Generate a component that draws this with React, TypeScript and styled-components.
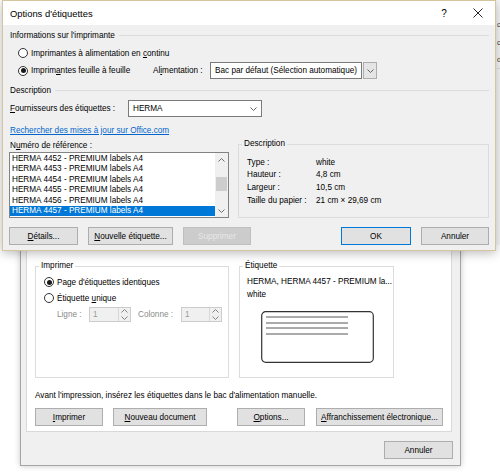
import styled, { createGlobalStyle, css } from "styled-components";

const GlobalStyle = createGlobalStyle`
  html, body { margin: 0; padding: 0; background: #fff; }
  body {
    font-family: "Liberation Sans", Arial, sans-serif;
    font-size: 8.2px;
    color: #000;
  }
  * { box-sizing: border-box; }
`;

const rows = ["4452", "4453", "4454", "4455", "4456", "4457"];

const Chevron = ({ up, color = "#555" }: { up?: boolean; color?: string }) => (
  <svg width="7" height="4" viewBox="0 0 7 4">
    <polyline
      points={up ? "0.5,3.5 3.5,0.5 6.5,3.5" : "0.5,0.5 3.5,3.5 6.5,0.5"}
      fill="none"
      stroke={color}
      strokeWidth="0.9"
    />
  </svg>
);

const CloseIcon = () => (
  <svg width="10" height="10" viewBox="0 0 10 10">
    <path d="M0.5 0.5 L9.5 9.5 M9.5 0.5 L0.5 9.5" stroke="#111" strokeWidth="0.9" />
  </svg>
);

const LabelPreview = () => (
  <svg width="113" height="52" viewBox="0 0 113 52">
    <rect x="0.7" y="0.7" width="111.6" height="50.6" rx="4" fill="#fff" stroke="#333" strokeWidth="1.2" />
    {[6, 12, 17, 23].map((y) => (
      <line key={y} x1="5" x2="87" y1={y} y2={y} stroke="#444" strokeWidth="0.9" />
    ))}
  </svg>
);

export default function App() {
  return (
    <>
      <GlobalStyle />
      <Desktop>
        <BgWindow>
          <BgLine>c</BgLine>
          <BgLine>c</BgLine>
          <BgLine>d</BgLine>
        </BgWindow>

        <LabelsDialog>
          <TabPanel>
            <FieldsRow>
              <Group $w={194}>
                <Legend>Imprimer</Legend>
                <GroupContent $pl={5} $pt={4}>
                  <RadioRow>
                    <RadioDot $checked />
                    <span>Page d'étiquettes identiques</span>
                  </RadioRow>
                  <RadioRow>
                    <RadioDot />
                    <span>
                      Étiquette <u>u</u>nique
                    </span>
                  </RadioRow>
                  <SpinRow>
                    <DimText $w={32}>Ligne :</DimText>
                    <SpinBox $w={42}>
                      <SpinValue>1</SpinValue>
                      <SpinButtons>
                        <Chevron up color="#777" />
                        <Chevron color="#777" />
                      </SpinButtons>
                    </SpinBox>
                    <DimText $w={43} $ml={7}>
                      Colonne :
                    </DimText>
                    <SpinBox $w={41}>
                      <SpinValue>1</SpinValue>
                      <SpinButtons>
                        <Chevron up color="#777" />
                        <Chevron color="#777" />
                      </SpinButtons>
                    </SpinBox>
                  </SpinRow>
                </GroupContent>
              </Group>
              <Group $w={155}>
                <Legend>Étiquette</Legend>
                <GroupContent $pl={4} $pt={4}>
                  <InfoLine>HERMA, HERMA 4457 - PREMIUM la...</InfoLine>
                  <InfoLine>white</InfoLine>
                  <Preview>
                    <LabelPreview />
                  </Preview>
                </GroupContent>
              </Group>
            </FieldsRow>
            <Note>Avant l'impression, insérez les étiquettes dans le bac d'alimentation manuelle.</Note>
            <ButtonRow>
              <Button $w={68}>
                <u>I</u>mprimer
              </Button>
              <Button $w={94} $ml={10}>
                <u>N</u>ouveau document
              </Button>
              <Button $w={68} $ml={30}>
                <u>O</u>ptions...
              </Button>
              <Button $w={127} $ml={11}>
                <u>A</u>ffranchissement électronique...
              </Button>
            </ButtonRow>
          </TabPanel>
          <Footer>
            <Button $w={69}>Annuler</Button>
          </Footer>
        </LabelsDialog>

        <OptionsDialog>
          <TitleBar>
            <Title>Options d'étiquettes</Title>
            <TitleButton>?</TitleButton>
            <TitleButton>
              <CloseIcon />
            </TitleButton>
          </TitleBar>
          <DialogBody>
            <SectionHead>
              <span>Informations sur l'imprimante</span>
              <Rule />
            </SectionHead>
            <RadioRow $mt={5} $pl={9}>
              <RadioDot />
              <span>
                Imprimantes à alimentation en <u>c</u>ontinu
              </span>
            </RadioRow>
            <RadioRow $mt={2} $pl={9} $h={17}>
              <RadioDot $checked />
              <FixedText $w={122}>
                Imprim<u>a</u>ntes feuille à feuille
              </FixedText>
              <FixedText $w={57}>
                Al<u>i</u>mentation :
              </FixedText>
              <Select $w={152}>Bac par défaut (Sélection automatique)</Select>
              <DropButton>
                <Chevron />
              </DropButton>
            </RadioRow>
            <SectionHead $mt={5}>
              <span>Description</span>
              <Rule />
            </SectionHead>
            <SupplierRow>
              <FixedText $w={118}>
                <u>F</u>ournisseurs des étiquettes :
              </FixedText>
              <Select $w={134}>
                <span>HERMA</span>
                <InlineArrow>
                  <Chevron />
                </InlineArrow>
              </Select>
            </SupplierRow>
            <Link>Rechercher des mises à jour sur Office.com</Link>
            <MainRow>
              <LeftCol>
                <RefLabel>
                  N<u>u</u>méro de référence :
                </RefLabel>
                <ListBox>
                  <ListItems>
                    {rows.map((n, i) => (
                      <ListItem key={n} $selected={i === rows.length - 1}>
                        HERMA {n} - PREMIUM labels A4
                      </ListItem>
                    ))}
                  </ListItems>
                  <ScrollBar>
                    <ScrollArrow>
                      <Chevron up color="#606060" />
                    </ScrollArrow>
                    <ScrollTrack>
                      <ScrollThumb />
                    </ScrollTrack>
                    <ScrollArrow>
                      <Chevron color="#606060" />
                    </ScrollArrow>
                  </ScrollBar>
                </ListBox>
              </LeftCol>
              <Group $h={79} $grow>
                <Legend>Description</Legend>
                <DescGrid>
                  <span>Type :</span>
                  <span>white</span>
                  <span>Hauteur :</span>
                  <span>4,8 cm</span>
                  <span>Largeur :</span>
                  <span>10,5 cm</span>
                  <span>Taille du papier :</span>
                  <span>21 cm × 29,69 cm</span>
                </DescGrid>
              </Group>
            </MainRow>
            <ButtonRow $mt={9}>
              <Button $w={69}>
                <u>D</u>étails...
              </Button>
              <Button $w={85} $ml={10}>
                <u>N</u>ouvelle étiquette...
              </Button>
              <Button $w={68} $ml={10} $disabled>
                Supprimer
              </Button>
              <Spacer />
              <Button $w={70} $focused>
                OK
              </Button>
              <Button $w={68} $ml={10}>
                Annuler
              </Button>
            </ButtonRow>
          </DialogBody>
        </OptionsDialog>
      </Desktop>
    </>
  );
}

const Desktop = styled.div`
  position: relative;
  width: 500px;
  height: 474px;
  overflow: hidden;
  background: #fff;
`;

const BgWindow = styled.div`
  position: absolute;
  left: 470px;
  top: 0;
  width: 30px;
  height: 245px;
  background: #f7f7f7;
  padding: 16px 0 0 26px;
  border-left: 1px solid #ddd;
`;

const BgLine = styled.div`
  height: 17.5px;
  line-height: 17.5px;
  font-size: 7.4px;
  color: #444;
  &:last-child {
    border-bottom: 1px solid #ddd;
  }
`;

const OptionsDialog = styled.div`
  position: absolute;
  left: 2px;
  top: 0;
  width: 494px;
  height: 251px;
  z-index: 2;
  display: flex;
  flex-direction: column;
  background: #f0f0f0;
  border: 1px solid #d4c59e;
  box-shadow: 0 2px 10px rgba(0, 0, 0, 0.28);
`;

const TitleBar = styled.div`
  height: 24px;
  display: flex;
  align-items: center;
  padding-left: 7px;
  background: #fff;
`;

const Title = styled.div`
  flex: 1;
  font-size: 9.4px;
`;

const TitleButton = styled.div`
  width: 34px;
  height: 24px;
  display: flex;
  align-items: center;
  justify-content: center;
  font-size: 10px;
`;

const DialogBody = styled.div`
  display: flex;
  flex-direction: column;
  padding: 0 6px;
`;

const SectionHead = styled.div<{ $mt?: number }>`
  height: 12px;
  margin-top: ${(p) => p.$mt ?? 4}px;
  padding-left: 1px;
  display: flex;
  align-items: center;
  gap: 4px;
`;

const Rule = styled.div`
  flex: 1;
  height: 1px;
  background: #dcdcdc;
`;

const RadioRow = styled.div<{ $mt?: number; $pl?: number; $h?: number }>`
  height: ${(p) => p.$h ?? 14}px;
  margin-top: ${(p) => p.$mt ?? 2}px;
  padding-left: ${(p) => p.$pl ?? 0}px;
  display: flex;
  align-items: center;
  white-space: nowrap;
  &:first-child {
    margin-top: 0;
  }
`;

const RadioDot = styled.span<{ $checked?: boolean }>`
  position: relative;
  flex: none;
  width: 10px;
  height: 10px;
  margin-right: 3px;
  border: 1px solid #333;
  border-radius: 50%;
  background: #fff;
  ${(p) =>
    p.$checked &&
    css`
      &::after {
        content: "";
        position: absolute;
        inset: 1.5px;
        border-radius: 50%;
        background: #1a1a1a;
      }
    `}
`;

const FixedText = styled.span<{ $w: number }>`
  flex: none;
  width: ${(p) => p.$w}px;
  white-space: nowrap;
`;

const Select = styled.div<{ $w: number }>`
  width: ${(p) => p.$w}px;
  height: 17px;
  display: flex;
  align-items: center;
  padding-left: 4px;
  background: #fff;
  border: 1px solid #7a7a7a;
  white-space: nowrap;
`;

const DropButton = styled.div`
  width: 14px;
  height: 17px;
  margin-left: 1px;
  display: flex;
  align-items: center;
  justify-content: center;
  background: #e5e5e5;
  border: 1px solid #adadad;
`;

const InlineArrow = styled.span`
  margin-left: auto;
  margin-right: 4px;
  display: flex;
`;

const SupplierRow = styled.div`
  height: 17px;
  margin-top: 4px;
  padding-left: 1px;
  display: flex;
  align-items: center;
`;

const Link = styled.div`
  height: 12px;
  margin-top: 8px;
  padding-left: 1px;
  line-height: 12px;
  color: #0066cc;
  text-decoration: underline;
`;

const MainRow = styled.div`
  margin-top: 2px;
  display: flex;
  gap: 9px;
`;

const LeftCol = styled.div`
  width: 220px;
  display: flex;
  flex-direction: column;
`;

const RefLabel = styled.div`
  height: 13px;
  padding-left: 1px;
  line-height: 13px;
`;

const ListBox = styled.div`
  height: 66px;
  display: flex;
  background: #fff;
  border: 1px solid #828282;
`;

const ListItems = styled.div`
  flex: 1;
  padding-top: 1px;
`;

const ListItem = styled.div<{ $selected?: boolean }>`
  height: 10.4px;
  line-height: 10.4px;
  padding-left: 2px;
  white-space: nowrap;
  ${(p) =>
    p.$selected &&
    css`
      background: #0078d7;
      color: #fff;
    `}
`;

const ScrollBar = styled.div`
  width: 13px;
  display: flex;
  flex-direction: column;
  background: #f0f0f0;
`;

const ScrollArrow = styled.div`
  height: 13px;
  display: flex;
  align-items: center;
  justify-content: center;
`;

const ScrollTrack = styled.div`
  flex: 1;
  padding-top: 11px;
`;

const ScrollThumb = styled.div`
  height: 14px;
  margin: 0 1px;
  background: #cdcdcd;
`;

const Group = styled.fieldset<{ $w?: number; $h?: number; $grow?: boolean }>`
  margin: 0;
  padding: 0 0 0 3px;
  min-width: 0;
  border: 1px solid #dcdcdc;
  ${(p) => p.$w && `width: ${p.$w}px; flex: none;`}
  ${(p) => p.$grow && `flex: 1;`}
  height: ${(p) => p.$h ?? 117}px;
`;

const Legend = styled.legend`
  padding: 0 2px;
  line-height: 10px;
  height: 10px;
`;

const DescGrid = styled.div`
  display: grid;
  grid-template-columns: 69px 1fr;
  grid-auto-rows: 12.6px;
  align-items: center;
  padding: 7px 0 0 5px;
  white-space: nowrap;
`;

const GroupContent = styled.div<{ $pl: number; $pt: number }>`
  display: flex;
  flex-direction: column;
  padding: ${(p) => p.$pt}px 0 0 ${(p) => p.$pl}px;
`;

const SpinRow = styled.div`
  height: 15px;
  margin-top: 2px;
  padding-left: 13px;
  display: flex;
  align-items: center;
`;

const DimText = styled.span<{ $w: number; $ml?: number }>`
  flex: none;
  width: ${(p) => p.$w}px;
  margin-left: ${(p) => p.$ml ?? 0}px;
  color: #8a8a8a;
  white-space: nowrap;
`;

const SpinBox = styled.div<{ $w: number }>`
  width: ${(p) => p.$w}px;
  height: 15px;
  display: flex;
  background: #f0f0f0;
  border: 1px solid #cccccc;
`;

const SpinValue = styled.span`
  flex: 1;
  padding-left: 3px;
  line-height: 13px;
  color: #9a9a9a;
`;

const SpinButtons = styled.div`
  width: 12px;
  display: flex;
  flex-direction: column;
  align-items: center;
  justify-content: space-around;
  border-left: 1px solid #d8d8d8;
`;

const InfoLine = styled.div`
  height: 13px;
  line-height: 13px;
  white-space: nowrap;
`;

const Preview = styled.div`
  margin: 10px 0 0 14px;
  display: flex;
`;

const LabelsDialog = styled.div`
  position: absolute;
  left: 20px;
  top: 200px;
  width: 441px;
  height: 266px;
  z-index: 1;
  display: flex;
  flex-direction: column;
  padding: 0 8px 0 5px;
  background: #f0f0f0;
  border: 1px solid #a5a5a5;
  box-shadow: 0 0 6px rgba(0, 0, 0, 0.22);
`;

const TabPanel = styled.div`
  display: flex;
  flex-direction: column;
  padding: 60px 8px 5px 8px;
  background: #fff;
  border: 1px solid #d9d9d9;
  border-top: none;
`;

const FieldsRow = styled.div`
  display: flex;
  gap: 10px;
`;

const Note = styled.div`
  height: 12px;
  margin-top: 12px;
  line-height: 12px;
  white-space: nowrap;
`;

const ButtonRow = styled.div<{ $mt?: number }>`
  height: 18px;
  margin-top: ${(p) => p.$mt ?? 6}px;
  display: flex;
`;

const Spacer = styled.div`
  flex: 1;
`;

const Button = styled.div<{
  $w: number;
  $ml?: number;
  $focused?: boolean;
  $disabled?: boolean;
}>`
  width: ${(p) => p.$w}px;
  height: 18px;
  margin-left: ${(p) => p.$ml ?? 0}px;
  display: flex;
  align-items: center;
  justify-content: center;
  white-space: nowrap;
  background: #e1e1e1;
  border: 1px solid #adadad;
  ${(p) =>
    p.$focused &&
    css`
      border: 1.5px solid #0078d7;
    `}
  ${(p) =>
    p.$disabled &&
    css`
      background: #cccccc;
      border-color: #bfbfbf;
      color: #e8e8e8;
    `}
`;

const Footer = styled.div`
  display: flex;
  justify-content: flex-end;
  margin: 9px -1px 0 0;
`;
